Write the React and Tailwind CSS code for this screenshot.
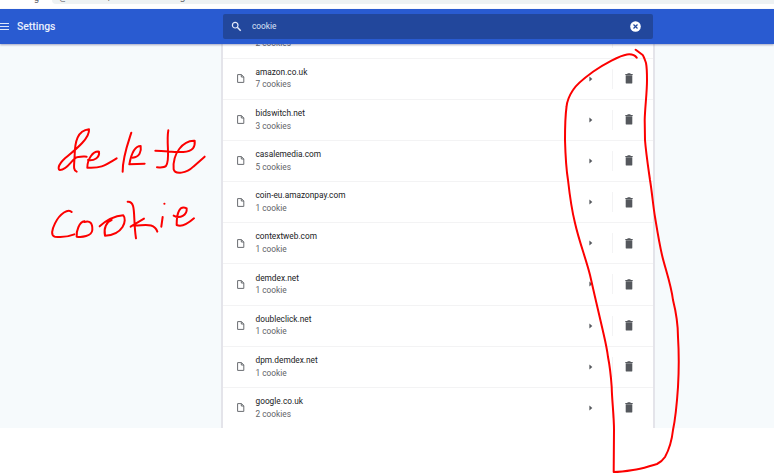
const rows = [
  ["amazon.co.uk", "7 cookies"],
  ["bidswitch.net", "3 cookies"],
  ["casalemedia.com", "5 cookies"],
  ["coin-eu.amazonpay.com", "1 cookie"],
  ["contextweb.com", "1 cookie"],
  ["demdex.net", "1 cookie"],
  ["doubleclick.net", "1 cookie"],
  ["dpm.demdex.net", "1 cookie"],
  ["google.co.uk", "2 cookies"],
];

function FileIcon() {
  return (
    <svg className="h-[9px] w-[8px] shrink-0" viewBox="0 0 8 9" fill="none" stroke="#6a6d71" strokeWidth="1">
      <path d="M0.6 0.6H4.4L6.8 2.9V8.4H0.6Z" />
      <path d="M4.3 0.7V3H6.8" />
    </svg>
  );
}

function TrashIcon() {
  return (
    <svg className="h-[11px] w-[8px]" viewBox="0 0 8 11" fill="#55585d">
      <path d="M0.7 2.2H7.3V9.7Q7.3 10.6 6.4 10.6H1.6Q0.7 10.6 0.7 9.7Z" />
      <path d="M0.3 0.9H2.2L2.8 0.3H5.2L5.8 0.9H7.7V1.9H0.3Z" />
    </svg>
  );
}

function Row({ name, count }) {
  return (
    <div className="flex h-[41.17px] shrink-0 items-center border-t border-[#f3f3f4] pl-[13.5px]">
      <FileIcon />
      <div className="ml-[11px] flex-1 pb-[0.5px] text-[8.3px] leading-[12.6px]">
        <div className="text-[#202124]">{name}</div>
        <div className="text-[#5f6368]">{count}</div>
      </div>
      <svg className="h-[6px] w-[4px]" viewBox="0 0 4 6" fill="#55585d">
        <path d="M0.4 0.4L3.3 3L0.4 5.6Z" />
      </svg>
      <div className="ml-[19px] h-[20px] w-px bg-[#f3f3f4]" />
      <div className="flex w-[40px] justify-start pl-[12px]">
        <TrashIcon />
      </div>
    </div>
  );
}

export default function App() {
  return (
    <div className="relative h-[473px] w-[774px] overflow-hidden bg-white font-['Roboto','Liberation_Sans',sans-serif]">
      <div className="flex h-[9px] items-start overflow-hidden">
        <div className="mt-[-7px] w-[52px] pl-[34px] text-[9px] leading-[10px] text-[#5f6368]">g</div>
        <div className="h-[4px] flex-1 overflow-hidden rounded-bl-[4px] bg-[#eef2f3] pl-[7px]">
          <div className="mt-[-8px] text-[9.9px] leading-[10px] whitespace-nowrap text-[#5f6368]">@ Chrome | chrome://settings/siteData</div>
        </div>
      </div>
      <header className="relative flex h-[35px] items-center bg-[#295bd1] shadow-[0_1px_2px_rgba(60,64,120,0.45)]">
        <div className="flex w-[223px] items-center">
          <div className="flex w-[9px] flex-col gap-[2px]">
            <div className="h-px bg-[#dde6fa]" />
            <div className="h-px bg-[#dde6fa]" />
            <div className="h-px bg-[#dde6fa]" />
          </div>
          <div className="ml-[8px] text-[10.4px] font-medium text-[#eaf0fd]">Settings</div>
        </div>
        <div className="flex h-[25px] w-[430px] items-center rounded-[2px] bg-[#22479c] pl-[8px] pr-[12px]">
          <svg className="h-[11px] w-[11px]" viewBox="0 0 11 11" fill="none" stroke="#e4eafa" strokeWidth="1.2">
            <circle cx="4.2" cy="4.2" r="2.8" />
            <path d="M6.3 6.3L9.7 9.7" strokeWidth="1.5" />
          </svg>
          <div className="ml-[10px] flex-1 text-[8.3px] text-[#dce4f7]">cookie</div>
          <svg className="h-[11px] w-[11px]" viewBox="0 0 11 11">
            <circle cx="5.5" cy="5.5" r="5.3" fill="#fff" />
            <path d="M3.5 3.5L7.5 7.5M7.5 3.5L3.5 7.5" stroke="#22479c" strokeWidth="1.2" />
          </svg>
        </div>
      </header>
      <main className="flex h-[384px] overflow-hidden bg-[#f6fafc] pl-[221px]">
        <div className="flex h-[384px] w-[434px] shrink-0 flex-col justify-end overflow-hidden border-x-2 border-[#e4e4ea] bg-white">
          <Row name="amazon.com" count="2 cookies" />
          {rows.map(([name, count]) => (
            <Row key={name} name={name} count={count} />
          ))}
        </div>
      </main>
      <svg className="pointer-events-none absolute inset-0 h-full w-full" viewBox="0 0 774 473" fill="none" stroke="#fc0000" strokeWidth="2" strokeLinecap="round" strokeLinejoin="round">
        <path d="M636.7 57.7C634 54 631 54 627 54.500C620 55.500 604 64 593 71.700C583 79 576 85 573 90C569 96 567 101 566.500 107C565 118 565 129 565 140C565.500 158 566 168 568 180C570 198 572 211 575 223C579 241 586 259 590 275C594 293 599 314 602.700 330C605 340 607 348 608 357C610 367 611 377 611.700 387C612 401 614 416 614 430L613.700 472C621 472 627 471 633 470C642 469 649 466 657 464C661 462 663 460 665 457C670 448 672 439 673 430C676 416 677 402 678 387C679 370 679 353 678 337C678 323 676 312 673 300C671 284 665 268 662 255C659 242 657 229 655 217C653 205 652 192 650 180C648 166 646 153 645 140L644.700 120C645 107 647 93 647 80C647 74 647 68 646 63C645 60 644 57 642.700 55L635.700 49.700" />
        <g transform="translate(40 120) scale(.3333)" strokeWidth="6">
          <path d="M110 155C98 150 103 135 104 105C105 65 112 32 147 28C150 55 105 90 75 115C50 138 55 150 60 150C80 150 92 125 105 115C115 108 130 110 140 110" />
          <path d="M144 120C162 123 180 113 177 95C158 93 142 118 142 143C180 145 190 140 230 115" />
          <path d="M274 38C262 75 248 110 248 155" />
          <path d="M278 113C298 112 305 95 302 78C285 78 275 95 268 133L314 131" />
          <path d="M385 31C378 70 392 120 378 138C372 144 362 142 351 142M346 92C380 92 400 98 430 96C460 95 466 80 464 62C430 60 397 100 401 148C405 165 440 160 460 140L494 110" />
          <path d="M95 276C85 265 60 280 45 310C35 330 32 347 45 350C60 352 85 350 103 343" />
          <path d="M133 304C118 305 108 335 110 350C125 352 155 350 157 330C158 310 150 300 133 306" />
          <path d="M179 319C200 300 225 288 250 286C262 300 250 345 195 347C190 325 200 305 215 300" />
          <path d="M263 245C290 243 278 290 288 355M272 320L312 296M278 316C310 318 342 305 352 335" />
          <path d="M368 291L364 320M373 251H373.500" />
          <path d="M401 287C420 298 442 285 440 265C420 255 410 275 410 315C425 322 445 310 462 295" />
        </g>
      </svg>
    </div>
  );
}
